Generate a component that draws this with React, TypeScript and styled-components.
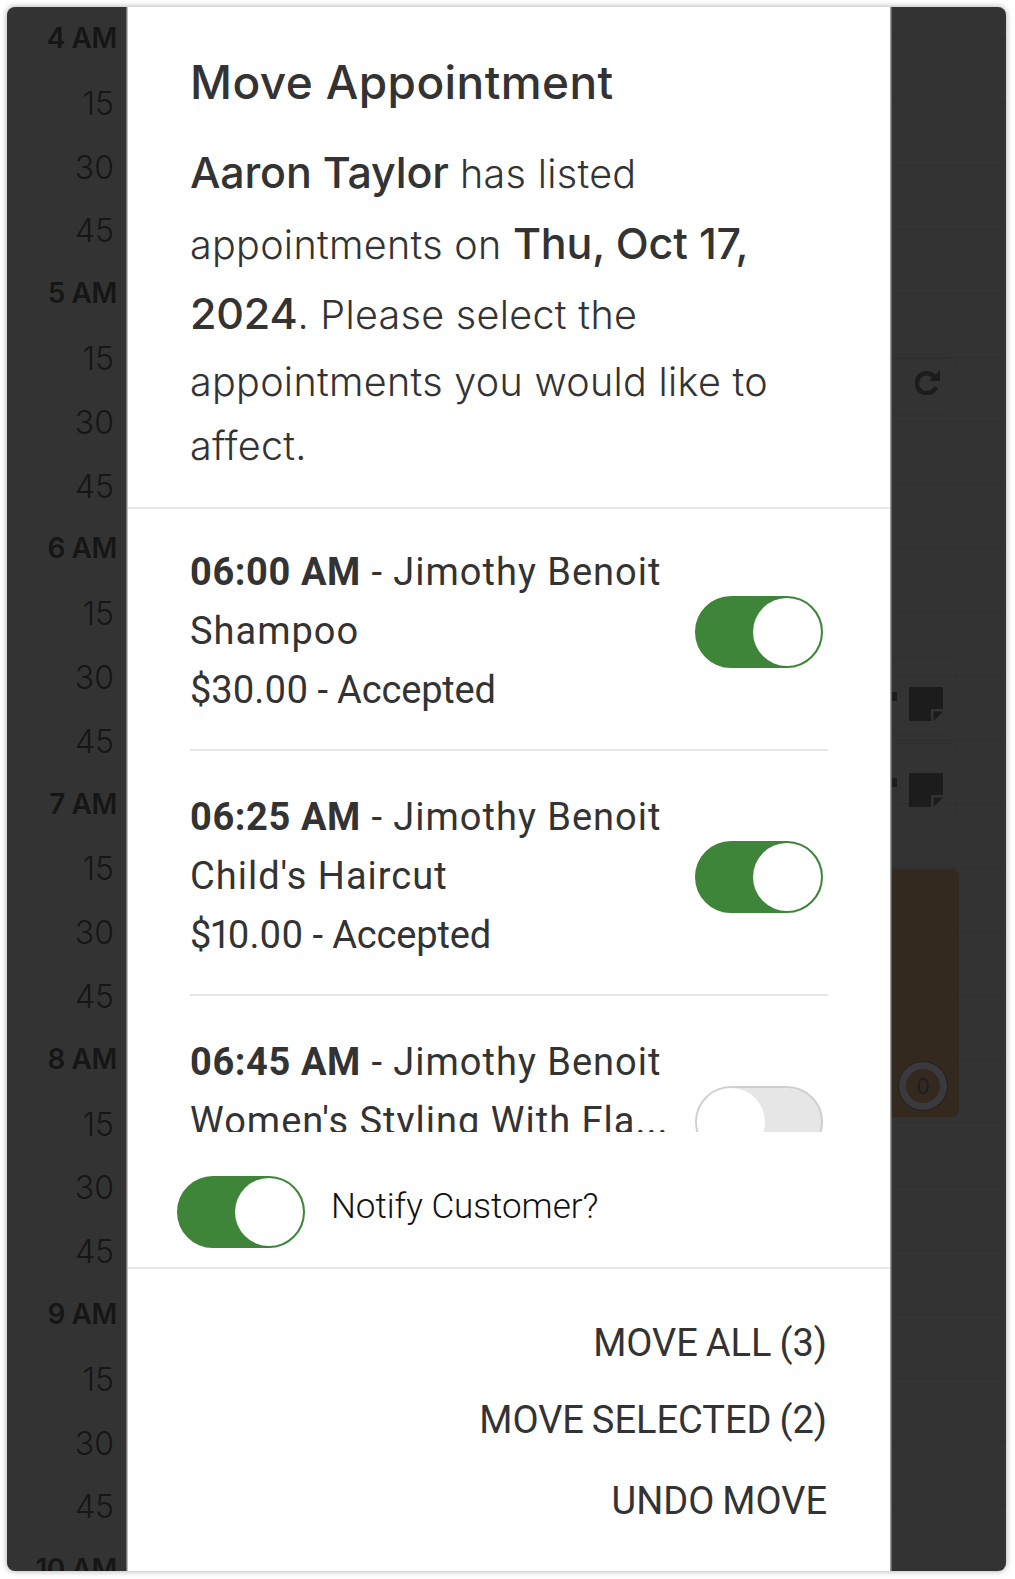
import React from "react";
import styled, { createGlobalStyle } from "styled-components";

const Global = createGlobalStyle`
  html, body { margin: 0; padding: 0; background: #fff; }
  * { box-sizing: border-box; }
`;

const Page = styled.div`
  width: 1015px;
  height: 1579px;
  padding: 7px 9px 8px 7px;
  font-family: Inter, "Liberation Sans", sans-serif;
`;

const Frame = styled.div`
  position: relative;
  width: 999px;
  height: 1564px;
  overflow: hidden;
  border-radius: 8px;
  background: #333;
  box-shadow: 0 0 6px rgba(0, 0, 0, 0.35);
`;

const Schedule = styled.div`
  display: grid;
  grid-template-columns: 120px 1fr;
`;

const TimeColumn = styled.div`
  display: flex;
  flex-direction: column;
`;

const TimeSlot = styled.div<{ $hour?: boolean }>`
  height: 63.8px;
  padding-right: ${(p) => (p.$hour ? "10px" : "13px")};
  padding-top: ${(p) => (p.$hour ? "16px" : "18px")};
  text-align: right;
  color: #161616;
  font-size: ${(p) => (p.$hour ? "28px" : "32px")};
  line-height: 30px;
  font-weight: ${(p) => (p.$hour ? 600 : 300)};
  letter-spacing: ${(p) => (p.$hour ? "-0.4px" : "0")};
`;

const Lines = styled.div`
  display: flex;
  flex-direction: column;
  margin-top: -32px;
`;

const Line = styled.div`
  height: 63.8px;
  border-bottom: 1px solid #2f2f2f;
`;

const GhostCard = styled.div<{ $top: number; $height: number; $inset: number; $end?: number }>`
  position: absolute;
  left: 800px;
  width: 150px;
  top: ${(p) => p.$top}px;
  height: ${(p) => p.$height}px;
  border-radius: 8px;
  border: 1px solid #303030;
  display: flex;
  align-items: flex-end;
  justify-content: flex-end;
  padding: 0 ${(p) => p.$end ?? 13}px ${(p) => p.$inset}px 0;
`;

const HiddenIconEdge = styled.div`
  position: absolute;
  left: 84px;
  top: 34px;
  width: 5px;
  height: 9px;
  background: #1c1c1c;
`;

const Booking = styled.div`
  position: absolute;
  left: 800px;
  top: 862px;
  width: 152px;
  height: 248px;
  border-radius: 6px;
  background: #34291f;
`;

const CountBadge = styled.div`
  position: absolute;
  right: 11px;
  bottom: 6px;
  width: 50px;
  height: 50px;
  border-radius: 50%;
  background: #34291f;
  border: 1px solid #222;
  box-shadow: inset 0 0 0 7px #3a3a3e;
  color: #1e1e22;
  font-size: 21px;
  display: flex;
  align-items: center;
  justify-content: center;
`;

const Modal = styled.div`
  position: absolute;
  left: 121px;
  top: 0;
  bottom: 0;
  width: 762px;
  background: #fff;
  color: #333;
  display: flex;
  flex-direction: column;
  box-shadow: -1.5px 0 0 #bdbdbd, 1.5px 0 0 #9a9a9a;
`;

const Header = styled.div`
  padding: 47px 60px 0 62px;
  height: 502px;
  border-bottom: 2px solid #e9e9e9;
  flex: none;
`;

const Title = styled.h2`
  margin: 0 0 30px;
  font-size: 46px;
  line-height: 56px;
  font-weight: 450;
  letter-spacing: 0.4px;
  color: #333;
`;

const IntroLine = styled.p<{ $gap?: number }>`
  margin: ${(p) => p.$gap ?? 0}px 0 0;
  font-size: 39.5px;
  line-height: 64px;
  font-weight: 300;
  letter-spacing: 0.3px;
  white-space: nowrap;
  color: #333;
`;

const Strong = styled.strong`
  font-size: 43px;
  font-weight: 500;
  letter-spacing: -0.2px;
  color: #333;
`;

const List = styled.div`
  height: 626px;
  margin-top: -3px;
  overflow: hidden;
  padding: 0 62px;
  flex: none;
`;

const Row = styled.div`
  display: flex;
  align-items: center;
  justify-content: space-between;
  height: 245px;
  padding-top: 8px;
  border-bottom: 2px solid #e6e6e6;
  &:last-child { border-bottom-color: transparent; }
`;

const RowText = styled.div`
  width: 500px;
  height: 177px;
  font-family: Roboto, sans-serif;
  font-size: 38px;
  line-height: 59px;
  font-weight: 400;
  color: #333;
  white-space: nowrap;
`;

const RowName = styled.div`
  letter-spacing: 1px;
`;

const RowPrice = styled.div`
  font-variant-numeric: proportional-nums;
  letter-spacing: -0.15px;
`;

const RowTime = styled.span`
  font-weight: 700;
  letter-spacing: 0.6px;
`;

const Toggle = styled.div<{ $on: boolean }>`
  position: relative;
  flex: none;
  width: 128px;
  height: 72px;
  margin-right: 5px;
  border-radius: 36px;
  border: 2px solid ${(p) => (p.$on ? "#3f8539" : "#cfcfcf")};
  background: ${(p) => (p.$on ? "#3f8539" : "#e6e6e6")};
`;

const Knob = styled.div<{ $on: boolean }>`
  position: absolute;
  top: 0;
  ${(p) => (p.$on ? "right: 0;" : "left: 0;")}
  width: 68px;
  height: 68px;
  border-radius: 50%;
  background: #fff;
`;

const Notify = styled.div`
  flex: 1;
  display: flex;
  align-items: center;
  gap: 21px;
  padding: 24px 0 0 49px;
  border-bottom: 2px solid #e9e9e9;
`;

const NotifyLabel = styled.span`
  font-family: Roboto, sans-serif;
  font-size: 35px;
  font-weight: 300;
  padding-bottom: 10px;
  color: #111;
`;

const Footer = styled.div`
  height: 302px;
  flex: none;
  padding: 50px 63px 0 0;
  display: flex;
  flex-direction: column;
  align-items: flex-end;
`;

const Action = styled.button`
  border: 0;
  padding: 0;
  background: none;
  font-family: Roboto, sans-serif;
  font-size: 38px;
  font-weight: 450;
  word-spacing: -1.5px;
  line-height: 48px;
  color: #333;
  margin-bottom: 29px;
`;

const UndoAction = styled(Action)`
  margin-top: 4px;
`;

const hours = ["4 AM", "5 AM", "6 AM", "7 AM", "8 AM", "9 AM", "10 AM"];
const slots = hours.flatMap((h, i) => (i === hours.length - 1 ? [h] : [h, "15", "30", "45"]));

const NoteIcon = () => (
  <svg width="34" height="34" viewBox="0 0 34 34" aria-hidden="true">
    <path d="M1 0h32a1 1 0 0 1 1 1v21H22v12H1a1 1 0 0 1-1-1V1a1 1 0 0 1 1-1z" fill="#1c1c1c" />
    <path d="M24.500 24.500H34L24.500 34z" fill="#1c1c1c" />
  </svg>
);

const RedoIcon = () => (
  <svg width="26" height="26" viewBox="0 0 26 26" fill="none" aria-hidden="true">
    <path d="M21 18a10 10 0 1 1-1-9.500" stroke="#1c1c1c" strokeWidth="4.500" />
    <path d="M25 1v11H14z" fill="#1c1c1c" />
  </svg>
);

const appts: { time: string; name: string; price?: string; on: boolean }[] = [
  { time: "06:00 AM", name: "Shampoo", price: "$30.00 - Accepted", on: true },
  { time: "06:25 AM", name: "Child's Haircut", price: "$10.00 - Accepted", on: true },
  { time: "06:45 AM", name: "Women's Styling With Fla...", on: false },
];

export default function App() {
  return (
    <Page>
      <Global />
      <Frame>
        <Schedule>
          <TimeColumn>
            {slots.map((s, i) => (
              <TimeSlot key={i} $hour={s.includes("AM")}>{s}</TimeSlot>
            ))}
          </TimeColumn>
          <Lines>
            {slots.map((_, i) => (
              <Line key={i} />
            ))}
          </Lines>
        </Schedule>
        <GhostCard $top={351} $height={57} $inset={19} $end={15}><RedoIcon /></GhostCard>
        <GhostCard $top={650} $height={78} $inset={13}><HiddenIconEdge /><NoteIcon /></GhostCard>
        <GhostCard $top={736} $height={77} $inset={12}><HiddenIconEdge /><NoteIcon /></GhostCard>
        <Booking><CountBadge>0</CountBadge></Booking>
        <Modal>
          <Header>
            <Title>Move Appointment</Title>
            <IntroLine><Strong>Aaron Taylor</Strong> has listed</IntroLine>
            <IntroLine $gap={4.6}>appointments on <Strong>Thu, Oct 17,</Strong></IntroLine>
            <IntroLine $gap={4.6}><Strong>2024</Strong>. Please select the</IntroLine>
            <IntroLine $gap={2.5}>appointments you would like to</IntroLine>
            <IntroLine>affect.</IntroLine>
          </Header>
          <List>
            {appts.map((a) => (
              <Row key={a.time}>
                <RowText>
                  <RowName><RowTime>{a.time}</RowTime> - Jimothy Benoit</RowName>
                  <RowName>{a.name}</RowName>
                  {a.price && <RowPrice>{a.price}</RowPrice>}
                </RowText>
                <Toggle $on={a.on}><Knob $on={a.on} /></Toggle>
              </Row>
            ))}
          </List>
          <Notify>
            <Toggle $on><Knob $on /></Toggle>
            <NotifyLabel>Notify Customer?</NotifyLabel>
          </Notify>
          <Footer>
            <Action>MOVE ALL (3)</Action>
            <Action>MOVE SELECTED (2)</Action>
            <UndoAction>UNDO MOVE</UndoAction>
          </Footer>
        </Modal>
      </Frame>
    </Page>
  );
}
